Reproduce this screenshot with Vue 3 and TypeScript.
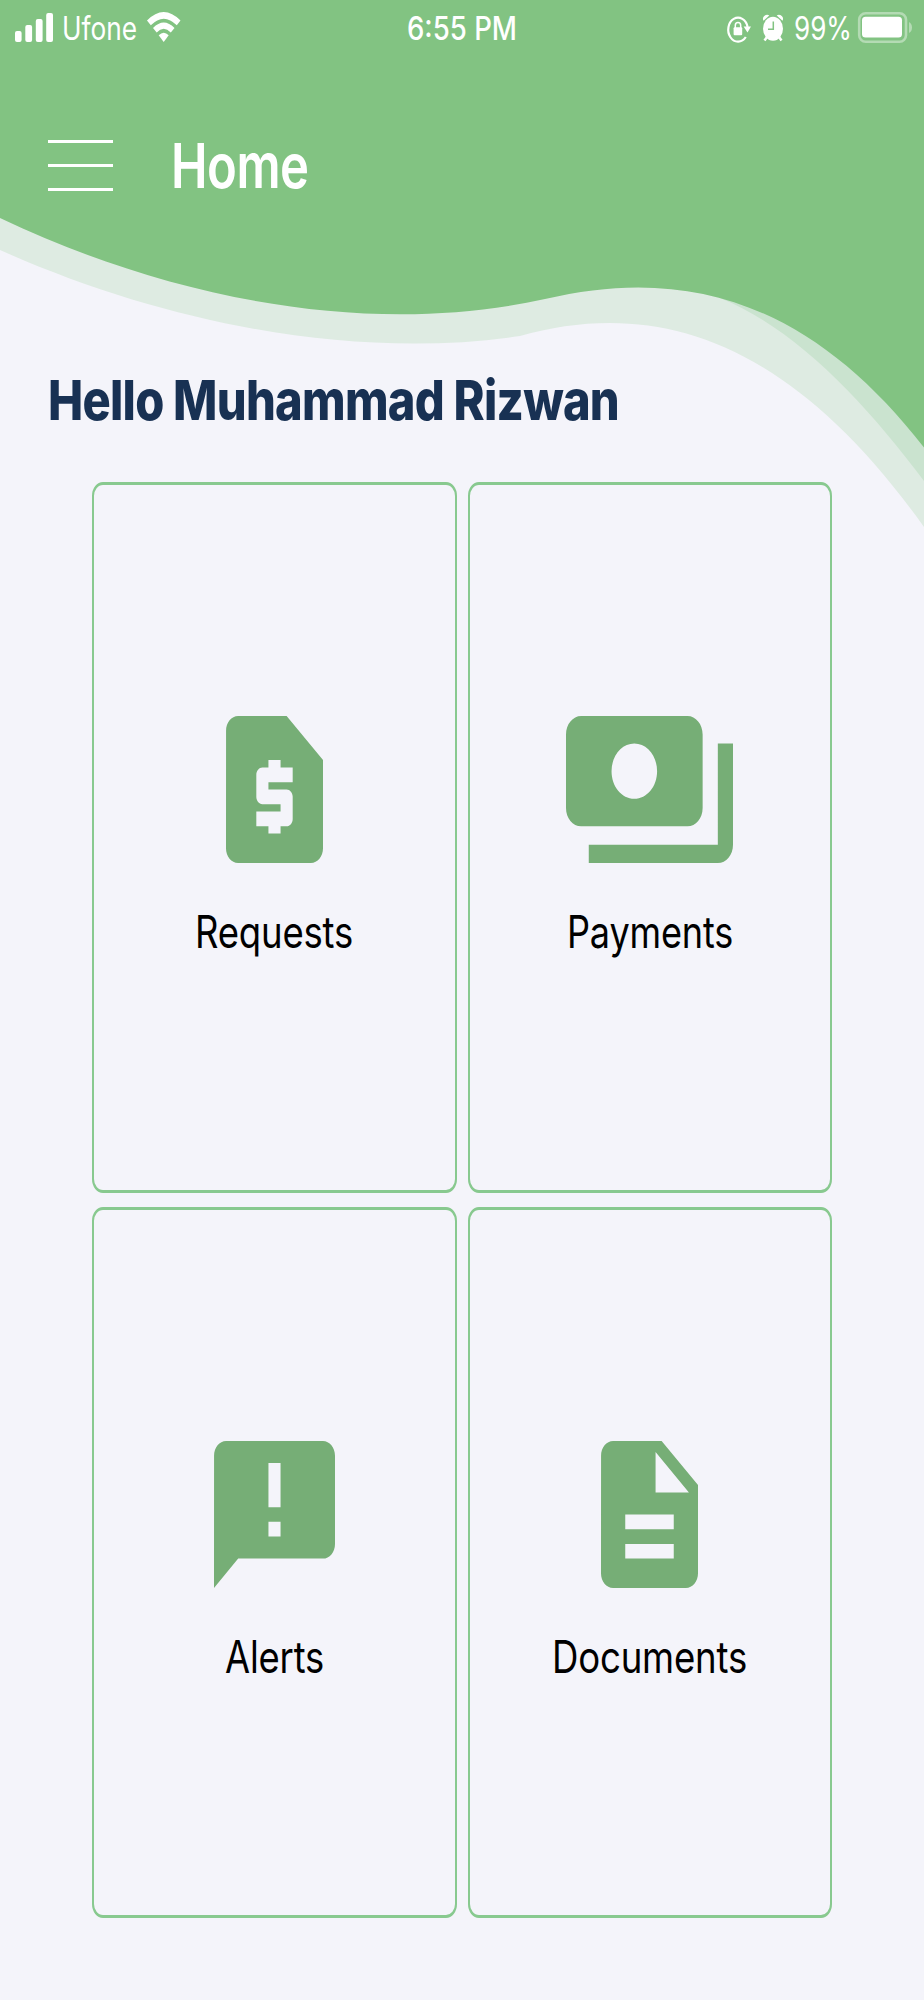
<script setup lang="ts">
interface Tile {
  label: string
  labelWidth: number
  width: number
  viewBox: string
  path: string
}

const tiles: Tile[] = [
  {
    label: 'Requests',
    labelWidth: 158,
    width: 97,
    viewBox: '4 2 16 20',
    path: 'M14 2H6c-1.1 0-1.99.9-1.99 2L4 20c0 1.1.89 2 1.99 2H18c1.1 0 2-.9 2-2V8l-6-6zm1 9h-4v1h3c.55 0 1 .45 1 1v3c0 .55-.45 1-1 1h-1v1h-2v-1H9v-2h4v-1h-3c-.55 0-1-.45-1-1v-3c0-.55.45-1 1-1h1V8h2v1h2v2z',
  },
  {
    label: 'Payments',
    labelWidth: 166,
    width: 167,
    viewBox: '1 4 22 16',
    path: 'M19 14V6c0-1.1-.9-2-2-2H3c-1.1 0-2 .9-2 2v8c0 1.1.9 2 2 2h14c1.1 0 2-.9 2-2zm-9-1c-1.66 0-3-1.34-3-3s1.34-3 3-3 3 1.34 3 3-1.34 3-3 3zm13-6v11c0 1.1-.9 2-2 2H4v-2h17V7h2z',
  },
  {
    label: 'Alerts',
    labelWidth: 99,
    width: 121,
    viewBox: '2 2 20 20',
    path: 'M20 2H4c-1.1 0-1.99.9-1.99 2L2 22l4-4h14c1.1 0 2-.9 2-2V4c0-1.1-.9-2-2-2zm-7 9h-2V5h2v6zm0 4h-2v-2h2v2z',
  },
  {
    label: 'Documents',
    labelWidth: 195,
    width: 97,
    viewBox: '4 2 16 20',
    path: 'M14 2H6c-1.1 0-1.99.9-1.99 2L4 20c0 1.1.89 2 1.99 2H18c1.1 0 2-.9 2-2V8l-6-6zm2 16H8v-2h8v2zm0-4H8v-2h8v2zm-3-5V3.5L18.5 9H13z',
  },
]
</script>

<template>
  <main class="screen">
    <svg class="wave" width="924" height="540" viewBox="0 0 924 540" aria-hidden="true">
      <path fill="#deebe2" d="M0 0V250C170 326 360 360 520 336C650 300 785 332 924 527V0Z" />
      <path fill="#cae3cf" d="M700 280L720 298C795 328 865 402 924 481V280Z" />
      <path fill="#82c382" d="M0 0V218C170 299 370 338 545 299C700 262 820 314 924 447.500V0Z" />
    </svg>

    <div class="status">
      <div class="group">
        <svg width="40" height="60" viewBox="14 0 40 60" fill="#fff">
          <rect x="15" y="31" width="6.6" height="11" rx="2" />
          <rect x="25.3" y="25" width="6.8" height="17" rx="2" />
          <rect x="35.8" y="19" width="6.8" height="23" rx="2" />
          <rect x="46.2" y="13" width="6.8" height="29" rx="2" />
        </svg>
        <svg class="carrier" width="78" height="60" fill="#fff">
          <text x="0" y="40" font-size="32" textLength="75" lengthAdjust="spacingAndGlyphs">Ufone</text>
        </svg>
        <svg width="36" height="60" viewBox="146 0 36 60" fill="#fff">
          <path d="M147 20.5Q163.700 3.500 180.500 20.500L176.800 25.300Q163.700 12 150.800 25.300Z" />
          <path d="M153 28Q163.700 17 174.500 28L170.800 32.500Q163.700 25.200 156.700 32.500Z" />
          <path d="M158.700 35.300Q163.700 30 168.700 35.300L163.700 42Z" />
        </svg>
      </div>
      <svg class="clock" width="112" height="60" fill="#fff">
        <text x="0" y="40" font-size="32" textLength="110" lengthAdjust="spacingAndGlyphs">6:55 PM</text>
      </svg>
      <div class="group">
        <svg width="60" height="60" viewBox="726 0 60 60">
          <path d="M745.800 37A9.800 12 0 1 1 747.600 27" fill="none" stroke="#fff" stroke-width="2.200" />
          <path d="M743.600 26.500H751L747.500 32.600Z" fill="#fff" />
          <rect x="733.600" y="27.300" width="8.600" height="8" rx="1" fill="#fff" />
          <path d="M735.300 28V25.500A2.700 3 0 0 1 740.700 25.500V28" fill="none" stroke="#fff" stroke-width="1.500" />
          <ellipse cx="773" cy="28.800" rx="10" ry="12" fill="#fff" />
          <path d="M767 37L764.500 40.500M779 37L781.500 40.500" stroke="#fff" stroke-width="2.500" />
          <path d="M763.500 20.800A4.300 4 0 0 1 769.300 15.400ZM776.700 15.400A4.300 4 0 0 1 782.500 20.800Z" fill="#fff" />
          <path d="M773.300 21.500V29.300H768" fill="none" stroke="#82c382" stroke-width="1.500" />
        </svg>
        <svg class="percent" width="59" height="60" fill="#fff">
          <text x="0" y="40" font-size="32" textLength="58" lengthAdjust="spacingAndGlyphs">99%</text>
        </svg>
        <svg width="56" height="60" viewBox="857 0 56 60">
          <rect x="859.200" y="13.200" width="46.800" height="28.600" rx="6.500" fill="none" stroke="#b4dbb4" stroke-width="2.600" />
          <rect x="862" y="16.700" width="40" height="20.800" rx="3.500" fill="#fff" />
          <path d="M909 22Q912 23.500 912 27.500T909 33Z" fill="#b4dbb4" />
        </svg>
      </div>
    </div>

    <header class="bar">
      <button class="menu" aria-label="Menu"><i /><i /><i /></button>
      <svg class="title" width="146" height="80" fill="#fff">
        <text x="0" y="58" font-size="61.500" textLength="137.500" lengthAdjust="spacingAndGlyphs">Home</text>
      </svg>
    </header>

    <svg class="hello" width="600" height="80" fill="#183153">
      <text x="0" y="60" font-size="55.500" textLength="571" lengthAdjust="spacingAndGlyphs">Hello Muhammad Rizwan</text>
    </svg>

    <section class="grid">
      <article v-for="t in tiles" :key="t.label" class="tile">
        <svg :width="t.width" height="147" :viewBox="t.viewBox" preserveAspectRatio="none" fill="#76ae76">
          <path :d="t.path" />
        </svg>
        <svg class="label" :width="t.labelWidth" height="60" fill="#000">
          <text x="0" y="40" font-size="44.500" :textLength="t.labelWidth" lengthAdjust="spacingAndGlyphs">{{ t.label }}</text>
        </svg>
      </article>
    </section>
  </main>
</template>

<style>
body {
  background: #f4f4fa;
}
</style>

<style scoped>
.screen {
  position: relative;
  box-sizing: border-box;
  width: 924px;
  height: 2000px;
  overflow: hidden;
  background: #f4f4fa;
  font-family: Inter, Roboto, "Liberation Sans", sans-serif;
  display: flex;
  flex-direction: column;
}
svg {
  display: block;
  flex: none;
  overflow: visible;
}
.wave {
  position: absolute;
  top: 0;
  left: 0;
}
.status,
.bar,
.hello,
.grid {
  position: relative;
}
.status {
  height: 60px;
  padding: 0 11px 0 14px;
  display: grid;
  grid-template-columns: 393px 1fr auto;
}
.group {
  display: flex;
}
.carrier {
  margin: 0 6px 0 8px;
}
.clock {
  font-weight: 500;
}
.percent {
  margin: 0 4px 0 8px;
}
.bar {
  height: 80px;
  margin-top: 70px;
  padding-left: 48px;
  display: flex;
}
.menu {
  width: 64.500px;
  height: 51px;
  margin: 10px 58px 0 0;
  padding: 0;
  border: 0;
  background: none;
  display: flex;
  flex-direction: column;
  justify-content: space-between;
}
.menu i {
  display: block;
  width: 100%;
  height: 3px;
  background: #fff;
}
.title {
  font-weight: 600;
  letter-spacing: -0.04em;
}
.hello {
  margin: 150px 0 0 47.500px;
  font-weight: 800;
  letter-spacing: -0.055em;
}
.grid {
  margin: 42px 0 0 92px;
  display: grid;
  grid-template-columns: 364.500px 364.500px;
  grid-auto-rows: 711px;
  gap: 14px 11px;
}
.tile {
  box-sizing: border-box;
  border: solid #88c98f;
  border-width: 3px 2px;
  border-radius: 11px / 14px;
  padding-top: 230.500px;
  display: flex;
  flex-direction: column;
  align-items: center;
}
.label {
  margin-top: 45px;
  letter-spacing: -0.015em;
}
</style>
